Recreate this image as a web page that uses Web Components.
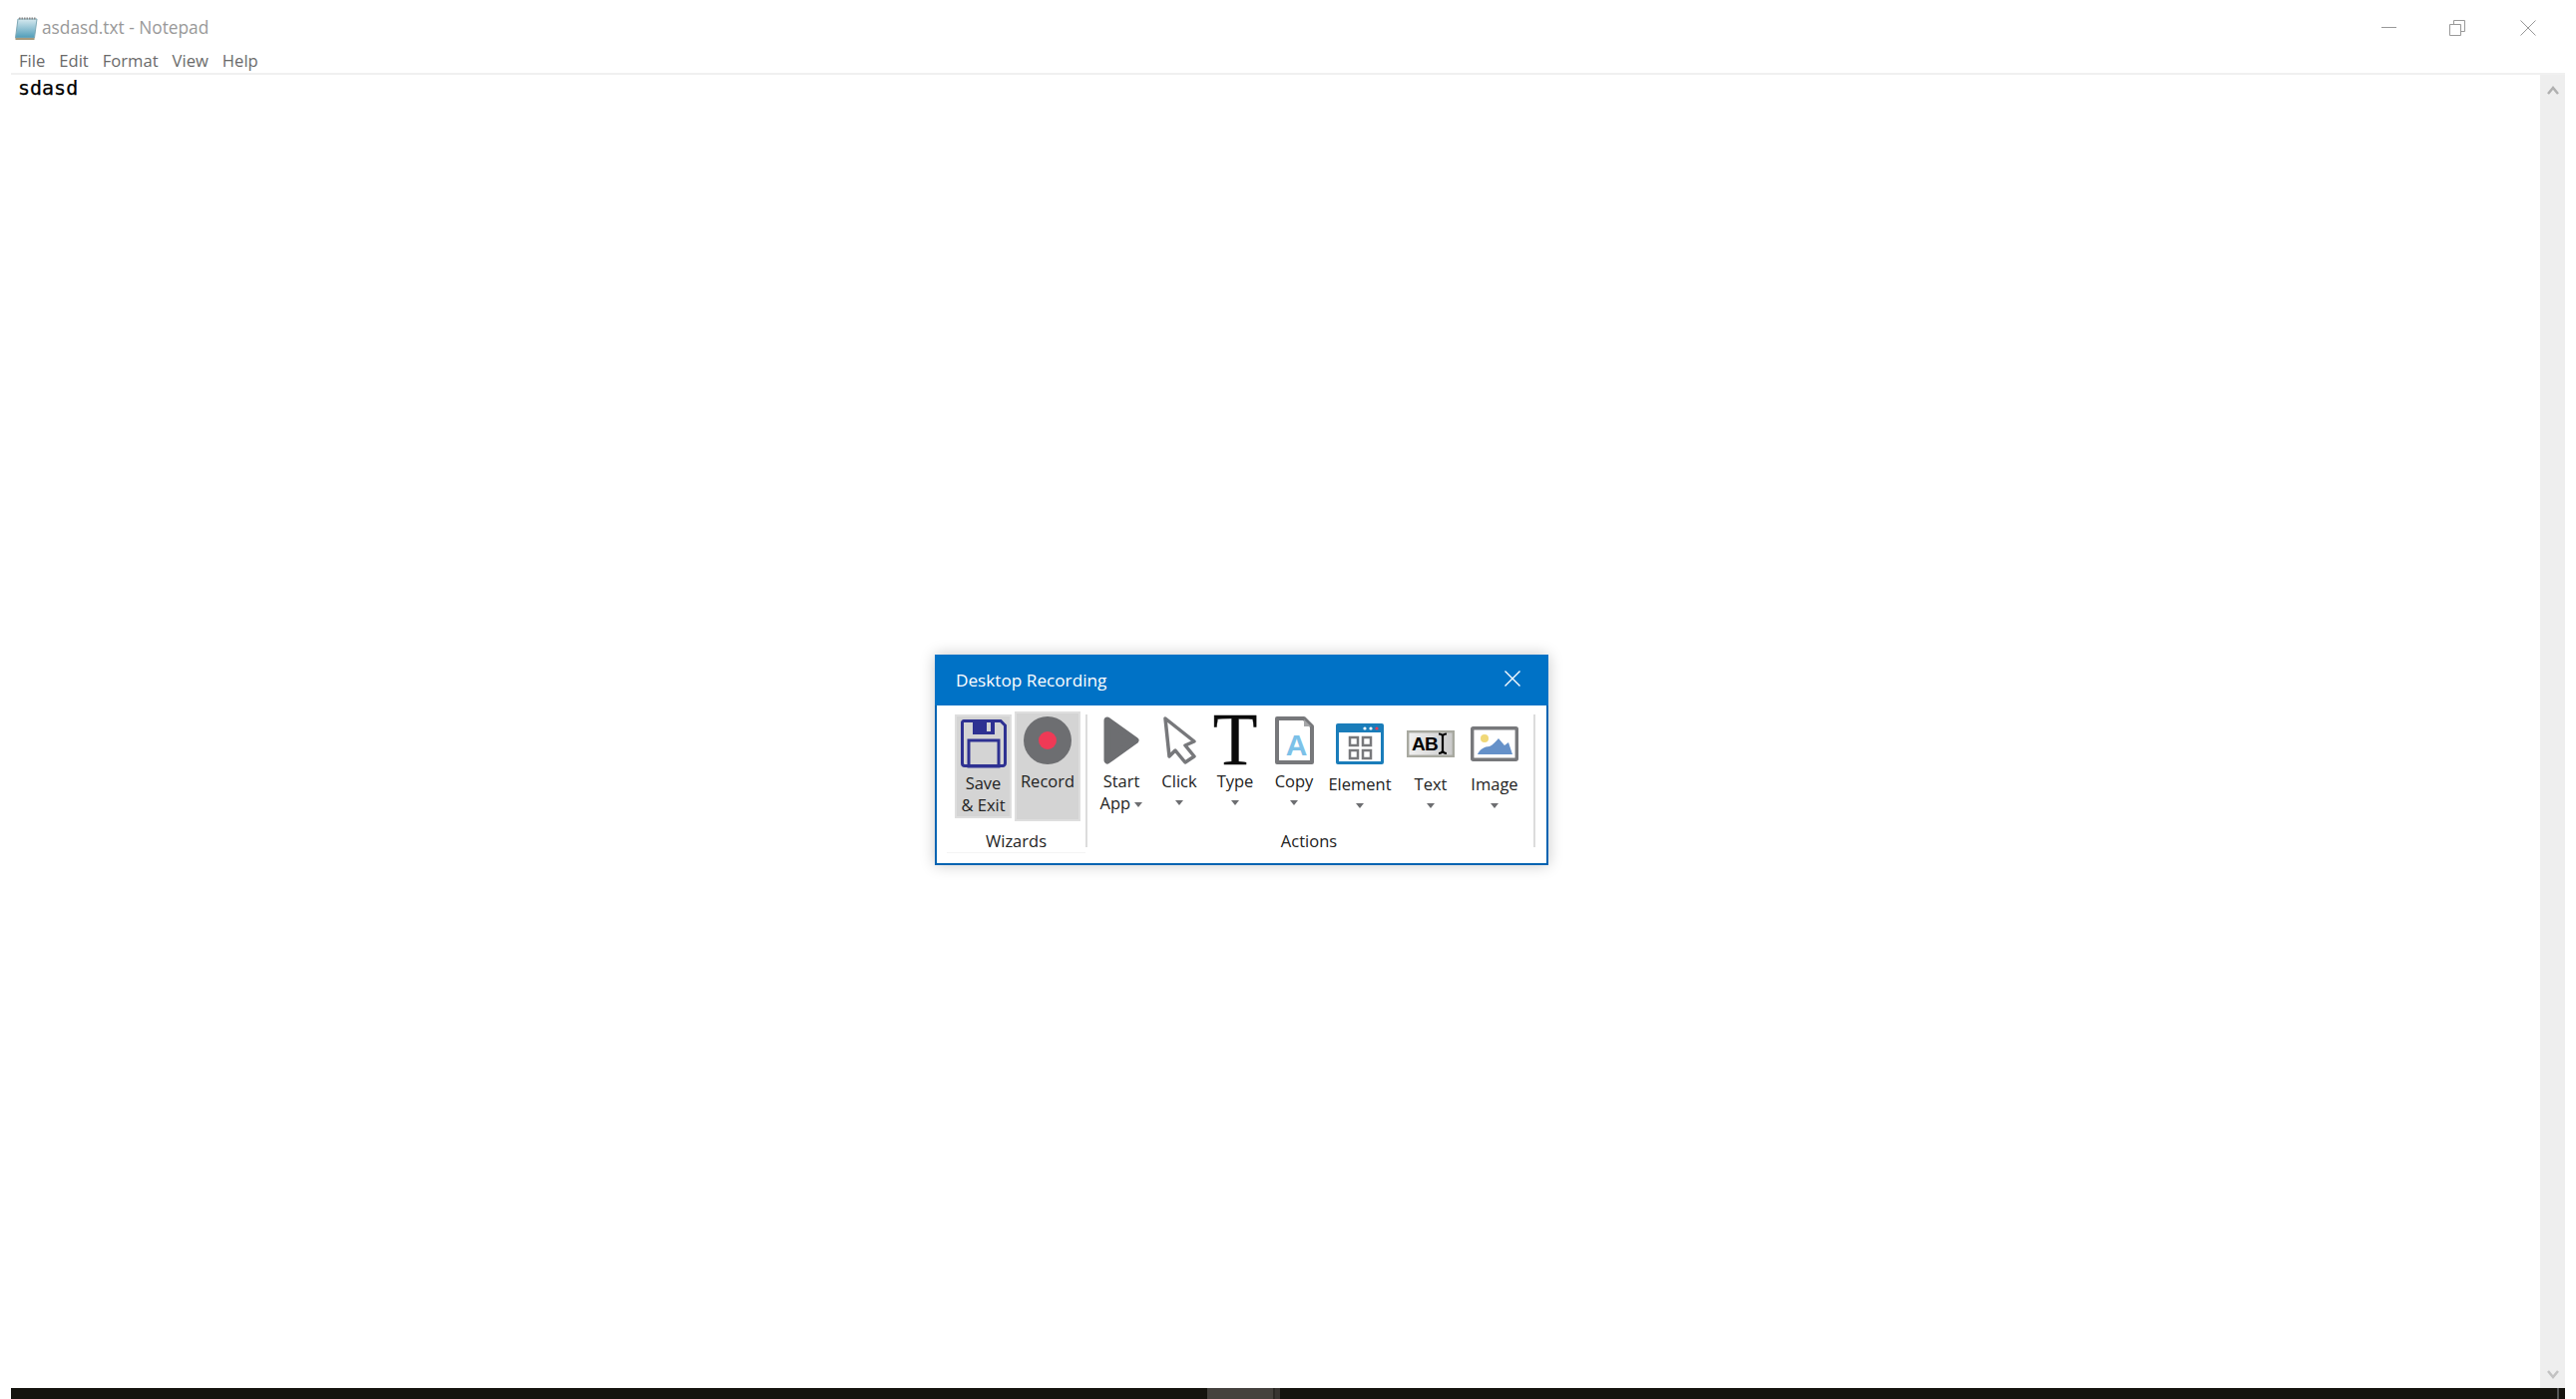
<!DOCTYPE html>
<html lang="en"><head><meta charset="utf-8"><title>asdasd.txt - Notepad</title>
<style>
html,body{margin:0;padding:0;background:#fff;overflow:hidden}
svg{display:block;overflow:visible}
</style></head>
<body>
<np-desktop>
  <np-window title="asdasd.txt - Notepad">
    <svg slot="appicon" width="24" height="25" viewBox="0 0 24 25"><defs><linearGradient id="nb" x1="0" y1="0" x2="0" y2="1"><stop offset="0" stop-color="#d6e9ef"/><stop offset="1" stop-color="#4f9cb8"/></linearGradient></defs><path d="M4 3H23L20.5 22H1.5Z" fill="url(#nb)" stroke="#7fa9b6" stroke-width="1"/><path d="M1.5 23H20.5" stroke="#a69a7c" stroke-width="2"/><path d="M5 2.5H22" stroke="#888" stroke-width="2" stroke-dasharray="1.5 1"/></svg>
    <np-menu-item>File</np-menu-item><np-menu-item>Edit</np-menu-item><np-menu-item>Format</np-menu-item><np-menu-item>View</np-menu-item><np-menu-item>Help</np-menu-item>
  </np-window>
  <rec-dialog title="Desktop Recording">
    <rec-group label="Wizards" style="width:131px" rule>
      <rec-tool pressed style="width:57px;height:104px;--area:58px;--gap:0px"><svg slot="icon" width="46" height="48" viewBox="0 0 46 48"><path d="M3 1.5H40L44.5 6V44a2.5 2.5 0 0 1-2.5 2.5H4A2.5 2.5 0 0 1 1.5 44V3A1.5 1.5 0 0 1 3 1.5Z" fill="none" stroke="#2e3192" stroke-width="3"/><path d="M12 2H34V15H12Z" fill="#2e3192"/><rect x="26" y="3" width="4" height="9" fill="#d4d4d4"/><rect x="8" y="21" width="30" height="26" fill="none" stroke="#2e3192" stroke-width="3"/></svg>Save<br>&amp; Exit</rec-tool>
      <rec-tool pressed style="width:66px;height:110px;margin:-3px 0 0 3px;padding-top:3px"><svg slot="icon" width="48" height="48" viewBox="0 0 48 48"><circle cx="24" cy="24" r="24" fill="#6d6e71"/><circle cx="24" cy="24" r="9" fill="#ef3a56"/></svg>Record</rec-tool>
    </rec-group>
    <rec-group label="Actions" style="width:447px;padding-left:0;--lab:-3px" >
      <rec-tool style="width:46px;margin-left:11px"><svg slot="icon" width="36" height="48" viewBox="0 0 36 48"><path d="M4 4L32 24L4 44Z" fill="#6d6e71" stroke="#6d6e71" stroke-width="7" stroke-linejoin="round"/></svg>Start<br>App <rec-caret></rec-caret></rec-tool>
      <rec-tool style="width:40px;margin-left:15px"><svg slot="icon" width="36" height="50" viewBox="0 0 36 50"><path d="M4 3L33 26L24 30L33 41L24 47L14 35L8 41Z" fill="#fff" stroke="#77787b" stroke-width="3.5" stroke-linejoin="round"/></svg>Click<rec-caret slot="caret"></rec-caret></rec-tool>
      <rec-tool style="width:40px;margin-left:16px"><svg slot="icon" width="44" height="48" viewBox="0 0 44 48"><text x="22" y="48" text-anchor="middle" font-family="Liberation Serif" font-size="73" fill="#0a0a0a" stroke="#0a0a0a" stroke-width=".4">T</text></svg>Type<rec-caret slot="caret"></rec-caret></rec-tool>
      <rec-tool style="width:40px;margin-left:19px"><svg slot="icon" width="39" height="48" viewBox="0 0 39 48"><path d="M2 2H29L37 10V46H2Z" fill="#fff" stroke="#77787b" stroke-width="4" stroke-linejoin="round"/><path d="M29 3V10H36Z" fill="#a5a6a8"/><text x="21.500" y="39" text-anchor="middle" font-family="Liberation Sans" font-weight="700" font-size="30" fill="#7cc1e8">A</text></svg>Copy<rec-caret slot="caret"></rec-caret></rec-tool>
      <rec-tool style="width:66px;margin-left:13px;--area:58px;--gap:1px"><svg slot="icon" width="48" height="41" viewBox="0 0 48 41"><rect width="48" height="41" rx="2" fill="#1a7dba"/><rect x="3" y="9" width="42" height="29" fill="#fff"/><circle cx="29" cy="5" r="1.6" fill="#fff"/><circle cx="35" cy="5" r="1.6" fill="#fff"/><circle cx="41" cy="5" r="1.6" fill="#ef3a56"/><g fill="none" stroke="#77787b" stroke-width="2.5"><rect x="14" y="14" width="8" height="8"/><rect x="27" y="14" width="8" height="8"/><rect x="14" y="27" width="8" height="8"/><rect x="27" y="27" width="8" height="8"/></g></svg>Element<rec-caret slot="caret"></rec-caret></rec-tool>
      <rec-tool style="width:50px;margin-left:13px;--area:58px;--gap:1px"><svg slot="icon" width="48" height="27" viewBox="0 0 48 27"><defs><linearGradient id="tg" x1="0" y1="0" x2="1" y2="0"><stop offset="0" stop-color="#f0f0f0"/><stop offset="1" stop-color="#cacaca"/></linearGradient></defs><rect x="1.2" y="1.2" width="45.6" height="24.6" fill="url(#tg)" stroke="#a8a9a0" stroke-width="2.4"/><text x="5" y="20" font-family="Liberation Sans" font-weight="700" font-size="19" letter-spacing="-.6" fill="#000">AB</text><path d="M32 3.5C34 3.5 35.5 4 36 5.5C36.5 4 38 3.5 40 3.5M36 5.5V20.500M32 23C34 23 35.500 22 36 20.500C36.500 22 38 23 40 23" fill="none" stroke="#000" stroke-width="2.2"/></svg>Text<rec-caret slot="caret"></rec-caret></rec-tool>
      <rec-tool style="width:50px;margin-left:14px;--area:58px;--gap:1px"><svg slot="icon" width="48" height="35" viewBox="0 0 48 35"><rect x="1.700" y="1.700" width="44.600" height="31.600" rx="1" fill="#fff" stroke="#77787b" stroke-width="3.400"/><circle cx="14" cy="12" r="4" fill="#f0d878"/><path d="M7 28C9 23 14 20 19 20C22 19 25 15 28 12L34 19L38 16L42 28Z" fill="#6591c9"/></svg>Image<rec-caret slot="caret"></rec-caret></rec-tool>
    </rec-group>
  </rec-dialog>
</np-desktop>
<script>
function def(name, html, mixin){
  const t=document.createElement('template');t.innerHTML=html;
  customElements.define(name,class extends HTMLElement{
    constructor(){super();this.attachShadow({mode:'open'}).appendChild(t.content.cloneNode(true));}
    connectedCallback(){ if(mixin) mixin(this); }
  });
}
const UI='"Open Sans","Noto Sans","Liberation Sans",sans-serif';
def('np-desktop',`<style>:host{display:block;position:relative;width:2582px;height:1402px;overflow:hidden;background:#fff}</style><slot></slot>`);
def('np-menu-item',`<style>:host{display:block;height:27px;font:16.600px/30px ${UI};color:#6a6a6a}</style><slot></slot>`);
def('np-window',`<style>
:host{display:grid;grid-template-rows:46px 27px 1fr 11px;height:1402px}
.title{display:flex;align-items:center;padding:10px 0 0 14px}
.name{margin-left:4px;font:17.300px/24px ${UI};color:#999}
.ctl{margin:-1px 0 0 auto;display:flex;padding-right:40px;gap:55px;align-items:center}
.ctl svg:first-child{margin-right:-2px}
.menu{display:flex;gap:14px;padding-left:19px}
.edit{display:grid;grid-template-columns:1fr 25px;margin:0 11px;border-top:2px solid #f0f0f0;min-height:0}
.txt{font:20px/24px "DejaVu Sans Mono","Liberation Mono",monospace;color:#000;padding:1px 0 0 7px;-webkit-text-stroke:.25px #000}
.sb{background:#eee;display:flex;flex-direction:column;justify-content:space-between;align-items:center;padding:11px 0 9px}
.task{margin:0 11px;background:#15140f;position:relative;overflow:hidden;display:flex}
.gap1{width:1199px}.act{width:66px;background:#45423e}.act2{width:7px;background:#373431;border-left:2px solid #2a2825;box-sizing:border-box}
.clock{position:absolute;left:2405px;top:9px;font:16px/20px ${UI};color:#fff}
.show{position:absolute;right:6px;top:0;width:2px;height:11px;background:#555}
</style>
<div class="title"><slot name="appicon"></slot><span class="name"></span>
<div class="ctl">
<svg width="15" height="15" viewBox="0 0 15 15"><path d="M0 7.500H15" stroke="#999" stroke-width="1"/></svg>
<svg width="16" height="16" viewBox="0 0 16 16" fill="none" stroke="#999"><path d="M.5 4.500H11.500V15.500H.5Z"/><path d="M4.500 4.500V.5H15.500V11.500H11.500"/></svg>
<svg width="16" height="16" viewBox="0 0 16 16"><path d="M.5 .5L15.500 15.500M15.500 .5L.5 15.500" stroke="#999" stroke-width="1" fill="none"/></svg>
</div></div>
<div class="menu"><slot></slot></div>
<div class="edit"><div class="txt">sdasd</div>
<div class="sb"><svg width="12" height="9" viewBox="0 0 12 9"><path d="M1 8L6 2L11 8" fill="none" stroke="#b0b0b0" stroke-width="2.500"/></svg><svg width="12" height="9" viewBox="0 0 12 9"><path d="M1 1L6 7L11 1" fill="none" stroke="#c2c2c2" stroke-width="2.500"/></svg></div></div>
<div class="task"><div class="gap1"></div><div class="act"></div><div class="act2"></div><span class="clock">10:15</span><div class="show"></div></div>`,
el=>{el.shadowRoot.querySelector('.name').textContent=el.getAttribute('title');});
def('rec-dialog',`<style>
:host{display:block;position:absolute;left:937px;top:656px;width:615px;height:211px;box-sizing:border-box;background:#fff;border:2px solid #0063b1;border-top:0;box-shadow:0 0 14px rgba(0,0,0,.22);font:16.500px/22px ${UI};color:#222}
.bar{height:51px;margin:0 -2px;background:#0072c6;display:flex;align-items:center;padding:0 0 0 21px;color:#fff;font:17.200px/24px ${UI}}
.bar svg{margin:-3px 28px 0 auto}
.rib{display:flex;padding:9px 0 0 18px}
</style>
<div class="bar"><span class="t"></span><svg width="16" height="16" viewBox="0 0 16 16"><path d="M.5 .5L15.500 15.500M15.500 .5L.5 15.500" stroke="#fff" stroke-width="1.400" fill="none"/></svg></div>
<div class="rib"><slot></slot></div>`,
el=>{el.shadowRoot.querySelector('.t').textContent=el.getAttribute('title');});
def('rec-group',`<style>
:host{display:block;box-sizing:content-box;height:133px;border-right:2px solid #dcdcdc;flex:none}
.row{display:flex;height:104px;align-items:flex-start}
.lab{margin-top:13px;margin-left:var(--lab,0);text-align:center;height:21px;line-height:20px}
:host([rule]) .lab{margin-left:-8px;border-bottom:1px solid #f4f4f4}
</style><div class="row"><slot></slot></div><div class="lab"></div>`,
el=>{el.shadowRoot.querySelector('.lab').textContent=el.getAttribute('label');});
def('rec-tool',`<style>
:host{display:block;flex:none;box-sizing:border-box;text-align:center;white-space:nowrap}
:host([pressed]){background:#d4d4d4;box-shadow:inset 0 0 0 2px #dedede}
.i{height:var(--area,52px);margin-bottom:var(--gap,4px);display:flex;align-items:center;justify-content:center}
.l{display:flex;justify-content:center;text-align:center}
.c{display:flex;justify-content:center;margin-top:8px;line-height:0}
</style><div class="i"><slot name="icon"></slot></div><div class="l"><div><slot></slot></div></div><div class="c"><slot name="caret"></slot></div>`);
def('rec-caret',`<style>:host{display:inline-block;width:0;height:0;border:4.500px solid transparent;border-top:5px solid #6d6e71;border-bottom:0;vertical-align:middle}</style>`);
</script>
</body></html>
